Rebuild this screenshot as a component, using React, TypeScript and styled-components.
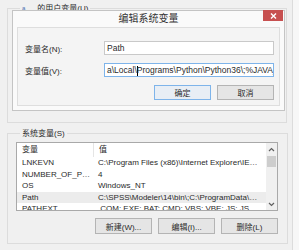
import React from 'react'
import styled, { createGlobalStyle } from 'styled-components'

const GlobalStyle = createGlobalStyle`
  html, body {
    margin: 0;
    padding: 0;
    background: #f7f7f7;
  }
  body {
    font-family: 'Liberation Sans', 'Noto Sans CJK SC', sans-serif;
    font-size: 8px;
    color: #2a2a2a;
  }
`

const Page = styled.div`
  position: relative;
  width: 299px;
  height: 250px;
  overflow: hidden;
  display: flex;
`

const Window = styled.div`
  width: 293px;
  height: 250px;
  box-sizing: border-box;
  background: #f0f0f0;
  border-right: 1px solid #dcdcdc;
  padding: 3px 0 0 7px;
  display: flex;
  flex-direction: column;
  gap: 5px;
`

const Group = styled.fieldset<{ $h: number }>`
  margin: 0;
  width: 280px;
  height: ${(p) => p.$h}px;
  box-sizing: border-box;
  border: 1px solid #dcdcdc;
  padding: 3px 9px 0 8px;
  display: flex;
  flex-direction: column;
`

const Legend = styled.legend`
  margin-left: 4px;
  padding: 0 2px;
  line-height: 11px;
  font-size: 8px;
`

const List = styled.div`
  width: 262px;
  height: 69px;
  box-sizing: border-box;
  border: 1px solid #a9a9a9;
  background: #fff;
  display: flex;
  overflow: hidden;
`

const Table = styled.div`
  flex: 1;
  min-width: 0;
  display: flex;
  flex-direction: column;
`

const HeaderRow = styled.div`
  display: grid;
  grid-template-columns: 77px 1fr;
  height: 14px;
  flex-shrink: 0;
  align-items: center;
`

const HeaderCell = styled.div<{ $sep?: boolean }>`
  padding-left: 5px;
  height: 14px;
  line-height: 14px;
  border-right: ${(p) => (p.$sep ? '1px solid #e5e5e5' : 'none')};
`

const Row = styled.div<{ $sel?: boolean }>`
  display: grid;
  grid-template-columns: 77px minmax(0, 1fr);
  height: 11.5px;
  line-height: 11.5px;
  flex-shrink: 0;
  background: ${(p) => (p.$sel ? '#ececec' : 'transparent')};
`

const Cell = styled.div`
  padding: 0 1px 0 5px;
  white-space: nowrap;
  overflow: hidden;
  text-overflow: ellipsis;
`

const ValueCell = styled(Cell)`
  padding-left: 4px;
  padding-right: 6px;
`

const Scrollbar = styled.div`
  width: 11px;
  flex-shrink: 0;
  background: #f0f0f0;
  display: flex;
  flex-direction: column;
  align-items: center;
`

const Arrow = styled.div`
  height: 12px;
  width: 11px;
  display: flex;
  align-items: center;
  justify-content: center;
`

const Thumb = styled.div`
  width: 9px;
  height: 11px;
  background: #cdcdcd;
  margin-top: 1px;
`

const Track = styled.div`
  flex: 1;
`

const ButtonRow = styled.div<{ $top: number }>`
  display: flex;
  justify-content: flex-end;
  gap: 6px;
  margin-top: ${(p) => p.$top}px;
`

const Button = styled.div<{ $primary?: boolean; $h?: number }>`
  width: 57px;
  height: ${(p) => p.$h ?? 16}px;
  box-sizing: border-box;
  border: 1px solid ${(p) => (p.$primary ? '#7eb4ea' : '#b4b4b4')};
  background: ${(p) => (p.$primary ? '#e8eef5' : '#e5e5e5')};
  display: flex;
  align-items: center;
  justify-content: center;
  font-size: 8px;
`

const UserLabel = styled.span`
  display: flex;
  align-items: center;
`

const UserName = styled.span`
  color: #4a6fb0;
  margin-right: 12px;
  font-size: 6px;
`

const Dialog = styled.div`
  position: absolute;
  left: 12px;
  top: 10px;
  width: 273px;
  height: 101px;
  box-sizing: border-box;
  background: #fafafa;
  border: 1px solid #c4c4c4;
  display: flex;
  flex-direction: column;
`

const TitleBar = styled.div`
  height: 16px;
  display: grid;
  grid-template-columns: 1fr auto 1fr;
  align-items: start;
  flex-shrink: 0;
`

const Title = styled.div`
  grid-column: 2;
  font-size: 10px;
  line-height: 15px;
  color: #333;
`

const Close = styled.div`
  grid-column: 3;
  justify-self: end;
  margin-right: 1px;
  margin-top: -1px;
  width: 20px;
  height: 11px;
  background: #c75050;
  display: flex;
  align-items: center;
  justify-content: center;
`

const Client = styled.div`
  flex: 1;
  margin: 0 4px 4px 4px;
  border: 1px solid #dedede;
  background: #f4f4f4;
  padding: 13px 5px 0 7px;
  display: flex;
  flex-direction: column;
  gap: 8px;
`

const Field = styled.div`
  display: grid;
  grid-template-columns: 79px 170px;
  align-items: center;
`

const Input = styled.div<{ $focus?: boolean }>`
  height: 14px;
  box-sizing: border-box;
  border: 1px solid ${(p) => (p.$focus ? '#7eb4ea' : '#c9c9c9')};
  background: #fff;
  padding-left: 2px;
  line-height: 12px;
  font-size: 8.5px;
  white-space: nowrap;
  overflow: hidden;
`

const Caret = styled.span`
  display: inline-block;
  width: 1px;
  height: 10px;
  background: #000;
  vertical-align: middle;
  margin: 0 -1px 0 0;
`

const rows = [
  { name: 'LNKEVN', value: 'C:\\Program Files (x86)\\Internet Explorer\\IEXPLORE.EXE' },
  { name: 'NUMBER_OF_PROCESSORS', value: '4' },
  { name: 'OS', value: 'Windows_NT' },
  { name: 'Path', value: 'C:\\SPSS\\Modeler\\14\\bin\\;C:\\ProgramData\\Oracle', sel: true },
  { name: 'PATHEXT', value: '.COM;.EXE;.BAT;.CMD;.VBS;.VBE;.JS;.JSE;.WSF' },
]

export default function App() {
  return (
    <>
      <GlobalStyle />
      <Page>
        <Window>
          <Group $h={120}>
            <Legend>
              <UserLabel>
                <UserName>a</UserName>
                的用户变量(U)
              </UserLabel>
            </Legend>
          </Group>
          <Group $h={116}>
            <Legend>系统变量(S)</Legend>
            <List>
              <Table>
                <HeaderRow>
                  <HeaderCell $sep>变量</HeaderCell>
                  <HeaderCell>值</HeaderCell>
                </HeaderRow>
                {rows.map((r) => (
                  <Row key={r.name} $sel={r.sel}>
                    <Cell>{r.name}</Cell>
                    <ValueCell>{r.value}</ValueCell>
                  </Row>
                ))}
              </Table>
              <Scrollbar>
                <Arrow>
                  <svg width="7" height="5" viewBox="0 0 7 5">
                    <path d="M1 4 L3.5 1.5 L6 4" fill="none" stroke="#606060" strokeWidth="1.2" />
                  </svg>
                </Arrow>
                <Thumb />
                <Track />
                <Arrow>
                  <svg width="7" height="5" viewBox="0 0 7 5">
                    <path d="M1 1 L3.5 3.5 L6 1" fill="none" stroke="#606060" strokeWidth="1.2" />
                  </svg>
                </Arrow>
              </Scrollbar>
            </List>
            <ButtonRow $top={7}>
              <Button>新建(W)...</Button>
              <Button>编辑(I)...</Button>
              <Button>删除(L)</Button>
            </ButtonRow>
          </Group>
        </Window>

        <Dialog>
          <TitleBar>
            <Title>编辑系统变量</Title>
            <Close>
              <svg width="7" height="6" viewBox="0 0 7 6">
                <path d="M1 0.5 L6 5.5 M6 0.5 L1 5.5" stroke="#fff" strokeWidth="1.4" />
              </svg>
            </Close>
          </TitleBar>
          <Client>
            <Field>
              <span>变量名(N):</span>
              <Input>Path</Input>
            </Field>
            <Field>
              <span>变量值(V):</span>
              <Input $focus>
                a\Local\<Caret />Programs\Python\Python36\;%JAVA_HOME%
              </Input>
            </Field>
            <ButtonRow $top={0}>
              <Button $primary $h={15}>确定</Button>
              <Button $h={15}>取消</Button>
            </ButtonRow>
          </Client>
        </Dialog>
      </Page>
    </>
  )
}
